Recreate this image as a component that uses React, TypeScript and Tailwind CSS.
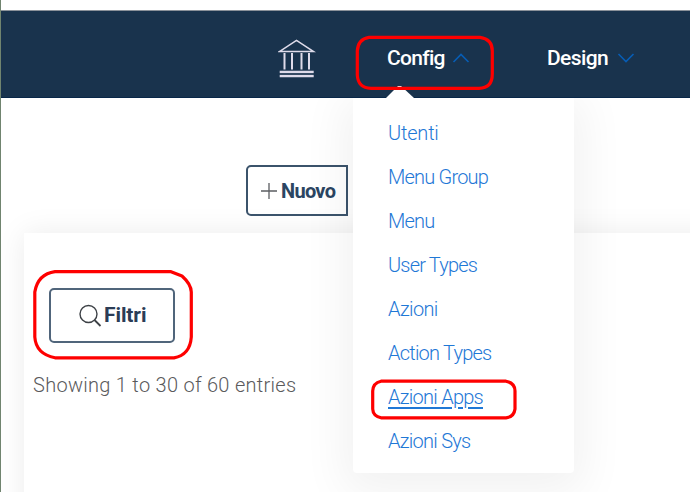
import React from 'react';

const menuItems = [
  { label: 'Utenti', style: 'tracking-[-0.2px]' },
  { label: 'Menu Group', style: 'tracking-[-0.8px]' },
  { label: 'Menu', style: 'tracking-[-0.8px]' },
  { label: 'User Types', style: 'tracking-[-0.8px]' },
  { label: 'Azioni', style: 'tracking-[-0.65px]' },
  { label: 'Action Types', style: 'tracking-[-0.78px]' },
  { label: 'Azioni Apps', style: 'tracking-[-0.75px] underline decoration-[1.5px] underline-offset-[3px]' },
  { label: 'Azioni Sys', style: 'tracking-[-0.75px]' },
];

function BankIcon() {
  return (
    <svg className="ml-[277px] mt-[28px] h-[40px] w-[38px] shrink-0" viewBox="0 0 38 40" fill="none" stroke="#dedbea" strokeWidth="1.5">
      <path d="M1.4 12.6 L18.5 1.4 L35.6 12.6 Z" />
      <path d="M6.5 14V30.5M14 14V30.5M23.5 14V30.5M31 14V30.5" strokeWidth="2" />
      <path d="M1.7 32.8H35.7M1.7 37.2H35.7" strokeWidth="2.2" />
      <path d="M1.7 35H35.7" strokeWidth="0.6" strokeOpacity="0.5" />
    </svg>
  );
}

function Dropdown() {
  return (
    <div className="absolute left-[352px] top-[98px] z-10 h-[375px] w-[221px] rounded-b bg-white pl-[35px] pt-[13px] shadow-[0_10px_45px_10px_rgba(0,0,0,0.055)]">
      <ul className="flex flex-col text-[20px] font-light leading-[44px] text-[#1f78d6]">
        {menuItems.map((item) => (
          <li key={item.label} className="h-[44px] whitespace-nowrap">
            <a className={item.style}>{item.label}</a>
          </li>
        ))}
      </ul>
    </div>
  );
}

function Highlights() {
  return (
    <svg className="pointer-events-none absolute left-[-1px] top-0 z-30 h-[492px] w-[690px]" viewBox="0 0 690 492" fill="none" stroke="#fe0000" strokeWidth="3.2" strokeLinejoin="round">
      <path d="M369 37.3H480Q492.3 39 492.3 51V74Q492.3 88 479 88.3H371Q358 88 357.3 75V51Q358 39 369 37.3Z" />
      <path d="M55 271.7H171L182 276Q191 284 191.3 292V337Q190 355 174 357.8H55Q36 354 34.8 337V292Q38 274 55 271.7Z" />
      <path d="M381 381.2H506Q515 383 515 391V409Q514 417 506 417.8H381Q373 416 372.7 409V391Q373 383 381 381.2Z" />
    </svg>
  );
}

export default function App() {
  return (
    <div className="relative h-[492px] w-[690px] overflow-hidden border-l border-[#70846f] bg-white font-[Roboto,sans-serif]">
      <div className="h-[11px] border-b border-[#8b929a] bg-white" />
      <nav className="relative z-20 flex h-[87px] items-start border-b border-[#082749] bg-[#19334d] text-[21px] font-medium leading-[30px] text-white">
        <BankIcon />
        <div className="relative ml-[71px] mt-[32px] flex items-center">
          <span className="w-[58px] whitespace-nowrap tracking-[-0.7px]">Config</span>
          <svg className="ml-[7px] h-[10px] w-[18px]" viewBox="0 0 18 10" fill="none" stroke="#075db5" strokeWidth="1.6"><path d="M1.5 9 9 1.5 16.5 9" /></svg>
          <svg className="absolute left-[-1px] top-[43px] z-20 h-[13px] w-[28px]" viewBox="0 0 28 13"><path d="M0 12V13H28V12L15 0H12Z" fill="white" /></svg>
        </div>
        <div className="ml-[77px] mt-[32px] flex items-center">
          <span className="w-[62px] whitespace-nowrap tracking-[-0.6px]">Design</span>
          <svg className="ml-[8px] h-[10px] w-[18px]" viewBox="0 0 18 10" fill="none" stroke="#075db5" strokeWidth="1.6"><path d="M1.5 1 9 8.5 16.5 1" /></svg>
        </div>
      </nav>
      <main>
        <div className="flex h-[135px] pl-[245px] pt-[67px]">
          <button className="flex h-[51px] w-[102px] items-center rounded-l-[5px] border-2 border-[#3b536b] pl-[12px] text-[20px] font-bold text-[#2b4562]">
            <svg className="h-[18px] w-[18px] shrink-0" viewBox="0 0 18 18" stroke="#5b5d62" strokeWidth="1.3"><path d="M1 9H17M9 1V17" /></svg>
            <span className="ml-[3px] tracking-[-0.7px]">Nuovo</span>
          </button>
        </div>
        <section className="ml-[23px] h-[300px] w-[700px] bg-white pl-[9px] pt-[55px] shadow-[0_0_28px_rgba(0,0,0,0.08)]">
          <button className="ml-[16px] flex h-[55px] w-[126px] items-center rounded-[5px] border-2 border-[#50657b] pl-[27px] text-[21px] font-bold text-[#2b3c56]">
            <svg className="h-[24px] w-[24px] shrink-0" viewBox="0 0 24 24" fill="none" stroke="#3d4146" strokeWidth="1.4"><circle cx="10.5" cy="10" r="8.5" /><path d="m16.5 16 6 6" strokeWidth="1.8" /></svg>
            <span className="ml-[2px] tracking-[-0.1px]">Filtri</span>
          </button>
          <p className="mt-[27px] whitespace-nowrap text-[20px] font-light leading-[30px] tracking-[0.28px] text-[#5a5a5c]">Showing 1 to 30 of 60 entries</p>
        </section>
      </main>
      <Dropdown />
      <Highlights />
    </div>
  );
}
